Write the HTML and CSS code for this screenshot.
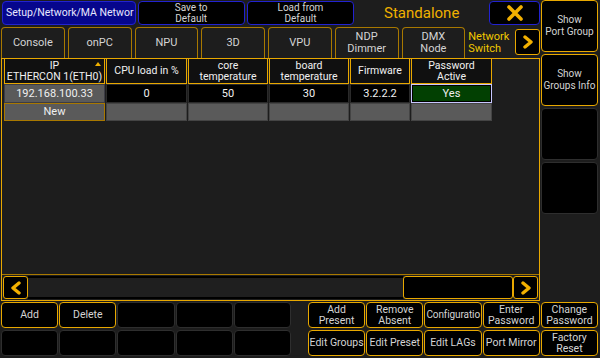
FILE: index.html
```html
<!DOCTYPE html>
<html lang="en">
<head>
  <meta charset="UTF-8" />
  <title>Setup/Network/MA Network</title>
  <link rel="stylesheet" href="styles.css">
</head>
<body>

  <div class="screen">
    <div class="upper">

      <div class="main">
        <div class="topbar">
          <div class="title">Setup/Network/MA Networ</div>
          <div class="top-btn save">Save to<br>Default</div>
          <div class="top-btn load">Load from<br>Default</div>
          <div class="mode">Standalone</div>
          <div class="top-btn close">
            <svg width="18" height="16" viewBox="0 0 18 16">
              <path d="M3 2 L15 14 M15 2 L3 14" stroke="#f2b000" stroke-width="3.6" stroke-linecap="round" />
            </svg>
          </div>
        </div>

        <div class="tabs">
          <div class="tab">Console</div>
          <div class="tab">onPC</div>
          <div class="tab">NPU</div>
          <div class="tab">3D</div>
          <div class="tab">VPU</div>
          <div class="tab">NDP<br>Dimmer</div>
          <div class="tab">DMX<br>Node</div>
          <div class="tab active">Network<br>Switch</div>
          <div class="arrow-btn">
            <svg width="12" height="14" viewBox="0 0 12 14">
              <path d="M3 2 L9 7 L3 12" fill="none" stroke="#f2b000" stroke-width="3.4" stroke-linejoin="round" stroke-linecap="round" />
            </svg>
          </div>
        </div>

        <div class="panel">
          <table class="grid">
            <colgroup>
              <col class="c-ip">
              <col class="c-cpu">
              <col class="c-core">
              <col class="c-board">
              <col class="c-fw">
              <col class="c-pw">
            </colgroup>
            <tr class="head">
              <th class="sorted">IP<br>ETHERCON 1(ETH0)<span class="sort-mark"></span></th>
              <th>CPU load in %</th>
              <th>core<br>temperature</th>
              <th>board<br>temperature</th>
              <th>Firmware</th>
              <th>Password<br>Active</th>
            </tr>
            <tr class="data">
              <td class="key">192.168.100.33</td>
              <td>0</td>
              <td>50</td>
              <td>30</td>
              <td>3.2.2.2</td>
              <td class="yes"><span>Yes</span></td>
            </tr>
            <tr class="new-row">
              <td class="new">New</td>
              <td></td>
              <td></td>
              <td></td>
              <td></td>
              <td></td>
            </tr>
          </table>

          <div class="scroller">
            <div class="arrow-btn">
              <svg width="12" height="14" viewBox="0 0 12 14">
                <path d="M9 2 L3 7 L9 12" fill="none" stroke="#f2b000" stroke-width="3.4" stroke-linejoin="round" stroke-linecap="round" />
              </svg>
            </div>
            <div class="track"></div>
            <div class="thumb"></div>
            <div class="arrow-btn">
              <svg width="12" height="14" viewBox="0 0 12 14">
                <path d="M3 2 L9 7 L3 12" fill="none" stroke="#f2b000" stroke-width="3.4" stroke-linejoin="round" stroke-linecap="round" />
              </svg>
            </div>
          </div>
        </div>
      </div>

      <div class="side">
        <div class="side-btn on">Show<br>Port Group</div>
        <div class="side-btn on">Show<br>Groups Info</div>
        <div class="side-btn"></div>
        <div class="side-btn"></div>
      </div>

    </div>

    <div class="bottom">
      <div class="keys">
        <div class="key-btn on">Add</div>
        <div class="key-btn on">Delete</div>
        <div class="key-btn"></div>
        <div class="key-btn"></div>
        <div class="key-btn"></div>
        <div class="key-btn"></div>
        <div class="key-btn"></div>
        <div class="key-btn"></div>
        <div class="key-btn"></div>
        <div class="key-btn"></div>
      </div>
      <div class="keys">
        <div class="key-btn on">Add<br>Present</div>
        <div class="key-btn on">Remove<br>Absent</div>
        <div class="key-btn on clip">Configuratio</div>
        <div class="key-btn on">Enter<br>Password</div>
        <div class="key-btn on">Change<br>Password</div>
        <div class="key-btn on">Edit Groups</div>
        <div class="key-btn on">Edit Preset</div>
        <div class="key-btn on">Edit LAGs</div>
        <div class="key-btn on">Port Mirror</div>
        <div class="key-btn on">Factory<br>Reset</div>
      </div>
    </div>
  </div>

</body>
</html>
```

FILE: styles.css
```css
* {
  margin: 0;
  padding: 0;
  box-sizing: border-box;
}

:root {
  --gold: #e8a800;
  --gold-dark: #a87800;
  --bg: #1d1d1d;
  --text: #d4d4d4;
  --blue: #2222d0;
}

body {
  width: 600px;
  height: 358px;
  overflow: hidden;
  background: var(--bg);
  color: var(--text);
  font-family: Roboto, 'Liberation Sans', sans-serif;
  font-size: 11px;
  line-height: 12px;
}

.screen {
  display: flex;
  flex-direction: column;
  height: 358px;
}

.upper {
  display: flex;
  height: 302px;
}

/* main area */

.main {
  width: 540px;
  padding-left: 1px;
  display: flex;
  flex-direction: column;
}

.topbar {
  display: flex;
  gap: 2px;
  height: 27px;
  padding: 1px 0 2px 1px;
}

.title {
  width: 134px;
  background: #06068c;
  border: 1px solid var(--blue);
  border-radius: 4px;
  color: #e8e8ff;
  font-size: 10.5px;
  line-height: 22px;
  padding-left: 3px;
  white-space: nowrap;
  overflow: hidden;
}

.top-btn {
  background: #000;
  border: 1px solid var(--blue);
  border-radius: 4px;
  display: flex;
  align-items: center;
  justify-content: center;
  text-align: center;
  font-size: 10px;
  line-height: 11.5px;
}

.save {
  width: 107px;
}

.load {
  width: 108px;
}

.mode {
  width: 131px;
  color: #f0b000;
  font-size: 15px;
  display: flex;
  align-items: center;
  justify-content: center;
}

.close {
  width: 51px;
}

.tabs {
  display: flex;
  gap: 3px;
  height: 31px;
  align-items: stretch;
}

.tab {
  width: 64px;
  border: 1px solid var(--gold-dark);
  border-bottom: none;
  border-radius: 4px 4px 0 0;
  display: flex;
  align-items: center;
  justify-content: center;
  text-align: center;
  line-height: 12px;
  color: var(--text);
}

.tab.active {
  width: 43px;
  border: none;
  color: #f0c800;
  justify-content: flex-start;
  text-align: left;
  white-space: nowrap;
  overflow: hidden;
}

.arrow-btn {
  width: 25px;
  background: #000;
  border: 1px solid var(--gold);
  border-radius: 3px;
  display: flex;
  align-items: center;
  justify-content: center;
}

.tabs .arrow-btn {
  margin: 2px 0 3px 1px;
}

.panel {
  flex: 1;
  border: 1px solid var(--gold);
  border-bottom: none;
  display: flex;
  flex-direction: column;
  justify-content: space-between;
  padding-left: 1px;
}

/* table */

.grid {
  border-collapse: separate;
  border-spacing: 1px 0;
  table-layout: fixed;
  width: 490px;
  color: #f0f0f0;
}

.c-ip { width: 101px; }
.c-cpu { width: 81px; }
.c-core { width: 80px; }
.c-board { width: 80px; }
.c-fw { width: 60px; }
.c-pw { width: 81px; }

.grid th {
  height: 25px;
  background: #101010;
  border: 1px solid var(--gold);
  border-top: none;
  font-weight: normal;
  font-size: 10.5px;
  line-height: 11.5px;
  white-space: nowrap;
  overflow: hidden;
  position: relative;
}

.sort-mark {
  position: absolute;
  right: 3px;
  top: 3px;
  border-left: 3px solid transparent;
  border-right: 3px solid transparent;
  border-bottom: 4px solid #f0b000;
}

.grid td {
  text-align: center;
  font-size: 11px;
}

.data td {
  height: 19px;
  background: #000;
  border: 1px solid #2a2a2a;
}

.data td.key {
  background: #5a5a5a;
  border-color: #3c3c44;
}

.data td.yes {
  padding: 0;
  border: 1px solid #c8c8ff;
  background: #000;
}

.yes span {
  display: block;
  height: 15px;
  margin: 1px;
  line-height: 15px;
  background: #024002;
}

.new-row td {
  height: 18px;
  background: #5a5a5a;
  border: 1px solid #444;
}

.new-row td.new {
  border-color: var(--gold-dark);
}

.scroller {
  display: flex;
  height: 27px;
  margin-left: -1px;
  padding: 1px;
  border-top: 1px solid var(--gold-dark);
  border-bottom: 1px solid var(--gold);
}

.track {
  flex: 1;
  background: #1f1f1f;
  border-top: 2px solid #000;
  border-bottom: 2px solid #000;
}

.thumb {
  width: 110px;
  background: #000;
  border: 1px solid var(--gold);
  border-radius: 3px;
}

/* side column */

.side {
  width: 60px;
  padding: 0 2px 0 1px;
  display: flex;
  flex-direction: column;
  gap: 2px;
}

.side-btn {
  height: 52px;
  background: #000;
  border: 1px solid #2e2e2e;
  border-radius: 4px;
  display: flex;
  align-items: center;
  justify-content: center;
  text-align: center;
  font-size: 10px;
  line-height: 12px;
}

.side-btn.on {
  border-color: var(--gold);
}

/* bottom keys */

.bottom {
  display: flex;
  justify-content: space-between;
  padding: 1px 2px 2px 1px;
}

.keys {
  width: 290px;
  display: grid;
  grid-template-columns: repeat(5, 1fr);
  grid-template-rows: 26px 26px;
  gap: 2px 1px;
}

.key-btn {
  background: #000;
  border: 1px solid #2e2e2e;
  border-radius: 4px;
  display: flex;
  align-items: center;
  justify-content: center;
  text-align: center;
  font-size: 10.5px;
  line-height: 11.5px;
  white-space: nowrap;
  overflow: hidden;
}

.key-btn.on {
  border-color: var(--gold);
}

.key-btn.clip {
  justify-content: flex-start;
  padding-left: 1px;
  font-size: 10px;
  letter-spacing: -0.1px;
}
```
